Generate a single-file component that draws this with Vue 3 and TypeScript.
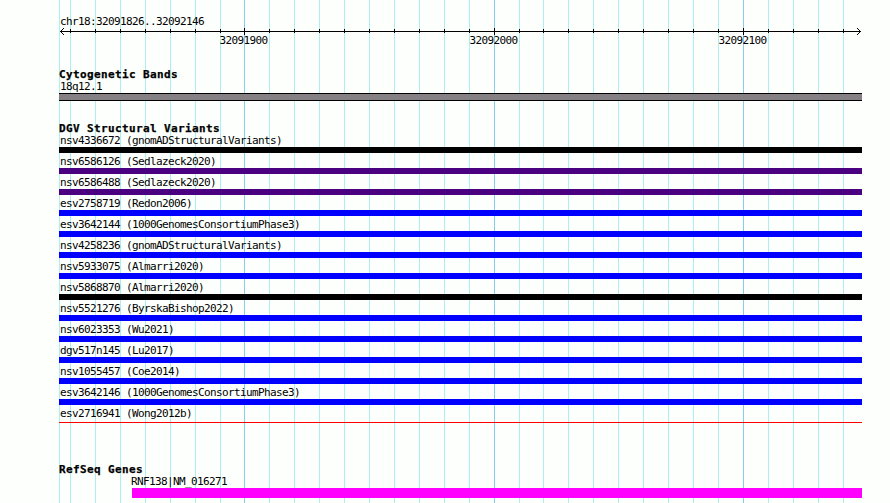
<script setup lang="ts">
interface Variant {
  id: string
  study: string
  kind: 'black' | 'purple' | 'blue' | 'thin'
}

const gridLines: number[] = [
  0, 11, 36, 61, 86, 111, 136, 161, 185, 210, 235, 260, 285, 310, 335, 360, 385,
  410, 435, 460, 484, 509, 534, 559, 584, 609, 634, 659, 684, 709, 734, 759, 784,
]
const ticks = gridLines.slice(1)
const majors = [
  { x: 185, label: '32091900' },
  { x: 435, label: '32092000' },
  { x: 684, label: '32092100' },
]
const isMajor = (x: number): boolean => majors.some((m) => m.x === x)

const variants: Variant[] = [
  { id: 'nsv4336672', study: 'gnomADStructuralVariants', kind: 'black' },
  { id: 'nsv6586126', study: 'Sedlazeck2020', kind: 'purple' },
  { id: 'nsv6586488', study: 'Sedlazeck2020', kind: 'purple' },
  { id: 'esv2758719', study: 'Redon2006', kind: 'blue' },
  { id: 'esv3642144', study: '1000GenomesConsortiumPhase3', kind: 'blue' },
  { id: 'nsv4258236', study: 'gnomADStructuralVariants', kind: 'blue' },
  { id: 'nsv5933075', study: 'Almarri2020', kind: 'blue' },
  { id: 'nsv5868870', study: 'Almarri2020', kind: 'black' },
  { id: 'nsv5521276', study: 'ByrskaBishop2022', kind: 'blue' },
  { id: 'nsv6023353', study: 'Wu2021', kind: 'blue' },
  { id: 'dgv517n145', study: 'Lu2017', kind: 'blue' },
  { id: 'nsv1055457', study: 'Coe2014', kind: 'blue' },
  { id: 'esv3642146', study: '1000GenomesConsortiumPhase3', kind: 'blue' },
  { id: 'esv2716941', study: 'Wong2012b', kind: 'thin' },
]
</script>

<template>
  <main class="browser">
    <div class="panel">
      <svg class="grid" width="803" height="503" shape-rendering="crispEdges" aria-hidden="true">
        <rect
          v-for="x in gridLines"
          :key="x"
          :x="x"
          y="0"
          width="1"
          height="503"
          :fill="isMajor(x) ? '#87ceeb' : '#afeeee'"
        />
      </svg>

      <header class="ruler">
        <div class="label">chr18:32091826..32092146</div>
        <svg class="axis" width="803" height="21" shape-rendering="crispEdges">
          <rect x="1" y="4" width="801" height="1" />
          <path d="M4 1h1v1h-1zM3 2h1v1h-1zM2 3h1v1h-1zM2 5h1v1h-1zM3 6h1v1h-1zM4 7h1v1h-1z" />
          <path d="M798 1h1v1h-1zM799 2h1v1h-1zM800 3h1v1h-1zM800 5h1v1h-1zM799 6h1v1h-1zM798 7h1v1h-1z" />
          <rect
            v-for="x in ticks"
            :key="x"
            :x="x"
            :y="isMajor(x) ? 1 : 2"
            width="1"
            :height="isMajor(x) ? 7 : 4"
          />
          <text v-for="m in majors" :key="m.label" :x="m.x - 24.5" y="17">{{ m.label }}</text>
        </svg>
      </header>

      <section class="track bands">
        <h2>Cytogenetic Bands</h2>
        <div class="label">18q12.1</div>
        <div class="band"></div>
      </section>

      <section class="track variants">
        <h2>DGV Structural Variants</h2>
        <div v-for="v in variants" :key="v.id" class="feature">
          <div class="label">{{ v.id }} ({{ v.study }})</div>
          <div class="bar" :class="v.kind"></div>
        </div>
      </section>

      <section class="track genes">
        <h2>RefSeq Genes</h2>
        <div class="gene">
          <div class="label">RNF138|NM_016271</div>
          <div class="exon"></div>
        </div>
      </section>
    </div>
  </main>
</template>

<style>
body {
  margin: 0;
  background: #fdfffc;
}
</style>

<style scoped>
.browser {
  position: relative;
  z-index: 0;
  width: 890px;
  height: 503px;
  overflow: hidden;
  background: #fdfffc;
  color: #000;
  font-family: 'DejaVu Sans Mono', 'Liberation Mono', monospace;
  font-size: 11px;
  line-height: 12px;
}
.panel {
  position: relative;
  box-sizing: border-box;
  width: 803px;
  height: 503px;
  margin-left: 59px;
  padding-top: 15px;
}
.grid {
  position: absolute;
  top: 0;
  left: 0;
  z-index: -1;
}
.label {
  box-sizing: border-box;
  height: 13px;
  padding: 1px 0 0 1px;
  letter-spacing: -0.622px;
  white-space: pre;
}
.ruler .label {
  height: 12px;
}
.axis {
  display: block;
}
.axis text {
  letter-spacing: -0.622px;
}
h2 {
  box-sizing: border-box;
  height: 12px;
  margin: 0;
  padding-top: 1px;
  font-size: 11px;
  font-weight: 700;
  line-height: 12px;
  letter-spacing: 0.378px;
  -webkit-text-stroke: 0.25px #000;
  white-space: pre;
}
.bands {
  margin-top: 20px;
}
.band {
  box-sizing: border-box;
  height: 8px;
  border: solid #000;
  border-width: 1px 0;
  background: #848084;
}
.variants {
  margin-top: 21px;
}
.feature {
  height: 21px;
}
.bar {
  height: 6px;
}
.black {
  background: #000;
}
.purple {
  background: #4b0082;
}
.blue {
  background: #00f;
}
.thin {
  height: 1px;
  margin-top: 2px;
  background: #f00;
}
.genes {
  margin-top: 35px;
}
.gene {
  margin-left: 73px;
}
.gene .label {
  padding-left: 0;
  text-indent: -1px;
}
.exon {
  height: 10px;
  background: #f0f;
}
</style>
